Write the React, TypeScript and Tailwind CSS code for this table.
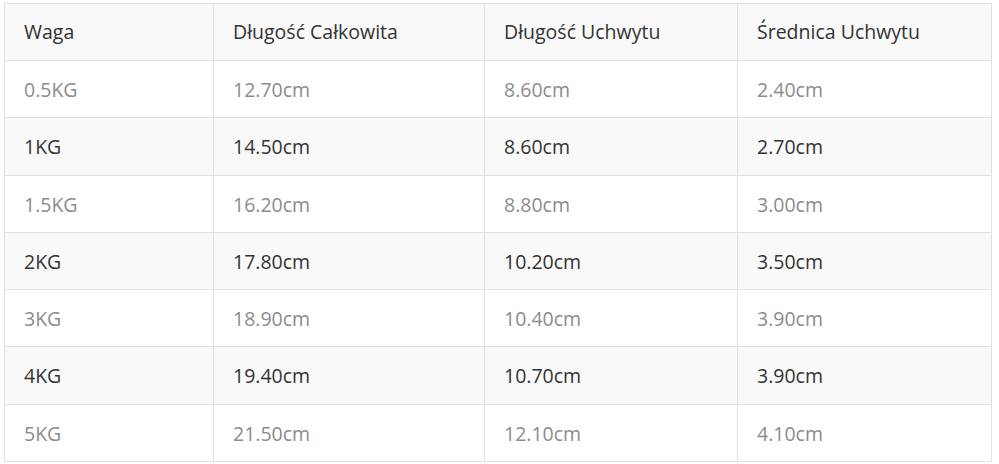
import React from 'react';

const rows = [
  ['0.5KG', '12.70cm', '8.60cm', '2.40cm'],
  ['1KG', '14.50cm', '8.60cm', '2.70cm'],
  ['1.5KG', '16.20cm', '8.80cm', '3.00cm'],
  ['2KG', '17.80cm', '10.20cm', '3.50cm'],
  ['3KG', '18.90cm', '10.40cm', '3.90cm'],
  ['4KG', '19.40cm', '10.70cm', '3.90cm'],
  ['5KG', '21.50cm', '12.10cm', '4.10cm'],
];

const headers = ['Waga', 'Długość Całkowita', 'Długość Uchwytu', 'Średnica Uchwytu'];

export default function App() {
  return (
    <div className="w-[999px] h-[464px] bg-white pt-[3px] pl-[4px]" style={{ fontFamily: '"Open Sans", sans-serif' }}>
      <table className="w-[987px] table-fixed border-collapse text-[19.5px]">
        <colgroup>
          <col className="w-[209px]" />
          <col className="w-[271px]" />
          <col className="w-[253px]" />
          <col className="w-[254px]" />
        </colgroup>
        <thead>
          <tr className="h-[57px] bg-[#f9f9f9]">
            {headers.map((h) => (
              <th key={h} className="border border-[#e1e1e1] px-[19px] pb-[1px] text-left font-normal text-[#333]">
                {h}
              </th>
            ))}
          </tr>
        </thead>
        <tbody>
          {rows.map((r, i) => (
            <tr
              key={r[0]}
              className={
                (i === 1 || i === 5 ? 'h-[58px] ' : 'h-[57px] ') +
                (i % 2 === 1 ? 'bg-[#f9f9f9] text-[#333]' : 'bg-white text-[#8c8c8c]')
              }
            >
              {r.map((c, j) => (
                <td key={j} className="border border-[#e1e1e1] px-[19px] pt-[1px]">
                  {c}
                </td>
              ))}
            </tr>
          ))}
        </tbody>
      </table>
    </div>
  );
}
